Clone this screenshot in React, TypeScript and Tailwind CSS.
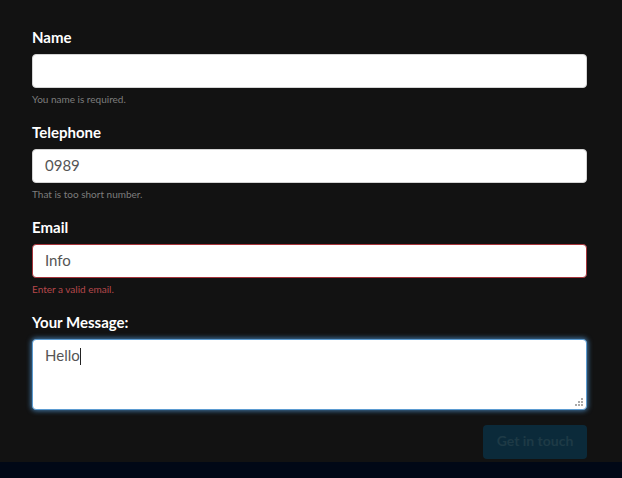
import React from "react";

const font = { fontFamily: '"Lato", "Open Sans", sans-serif' };

function Field({
  label,
  value,
  help,
  error,
}: {
  label: string;
  value: string;
  help: string;
  error?: boolean;
}) {
  return (
    <div className="flex flex-col">
      <label className="text-[15px] leading-[20px] font-bold text-white">{label}</label>
      <div
        className={`mt-[7px] h-[34px] rounded-[4px] bg-white border flex items-center px-3 pb-px text-[15px] text-[#555] ${
          error ? "border-[#a5343a]" : "border-[#d4d4d4]"
        }`}
      >
        {value}
      </div>
      <div
        className={`mt-[4px] text-[10px] leading-[14px] ${
          error ? "text-[#b5484b]" : "text-[#7d7d7d]"
        }`}
      >
        {help}
      </div>
    </div>
  );
}

export default function App() {
  return (
    <div className="w-[622px] h-[478px] bg-[#121212] flex flex-col overflow-hidden" style={font}>
      <div className="flex-1 pl-8 pr-[35px] pt-[27px] flex flex-col">
        <div className="flex flex-col gap-4">
          <Field label="Name" value="" help="You name is required." />
          <Field label="Telephone" value="0989" help="That is too short number." />
          <Field label="Email" value="Info" help="Enter a valid email." error />
        </div>
        <div className="flex flex-col mt-4">
          <label className="text-[15px] leading-[20px] font-bold text-white">Your Message:</label>
          <div className="relative mt-[7px] h-[71px] rounded-[4px] bg-white border border-[#5b9bd1] shadow-[0_0_5px_1px_rgba(80,150,210,0.75)] px-3 pt-[4px] text-[15px] text-[#555]">
            <span>Hello</span>
            <span className="inline-block w-px h-[17px] bg-[#222] align-middle -mt-[2px]" />
            <svg className="absolute right-[3px] bottom-[3px]" width="8" height="8" viewBox="0 0 8 8">
              <rect x="6" y="0" width="2" height="2" fill="#aaa" />
              <rect x="3" y="3" width="2" height="2" fill="#aaa" />
              <rect x="6" y="3" width="2" height="2" fill="#aaa" />
              <rect x="0" y="6" width="2" height="2" fill="#aaa" />
              <rect x="3" y="6" width="2" height="2" fill="#aaa" />
              <rect x="6" y="6" width="2" height="2" fill="#aaa" />
            </svg>
          </div>
        </div>
        <div className="flex justify-end mt-[15px]">
          <button className="w-[104px] h-[34px] rounded-[4px] bg-[#0b2a3a] text-[#1e3a46] text-[14px] font-bold pb-[3px]">
            Get in touch
          </button>
        </div>
      </div>
      <div className="h-[16px] bg-[#010816]" />
    </div>
  );
}
